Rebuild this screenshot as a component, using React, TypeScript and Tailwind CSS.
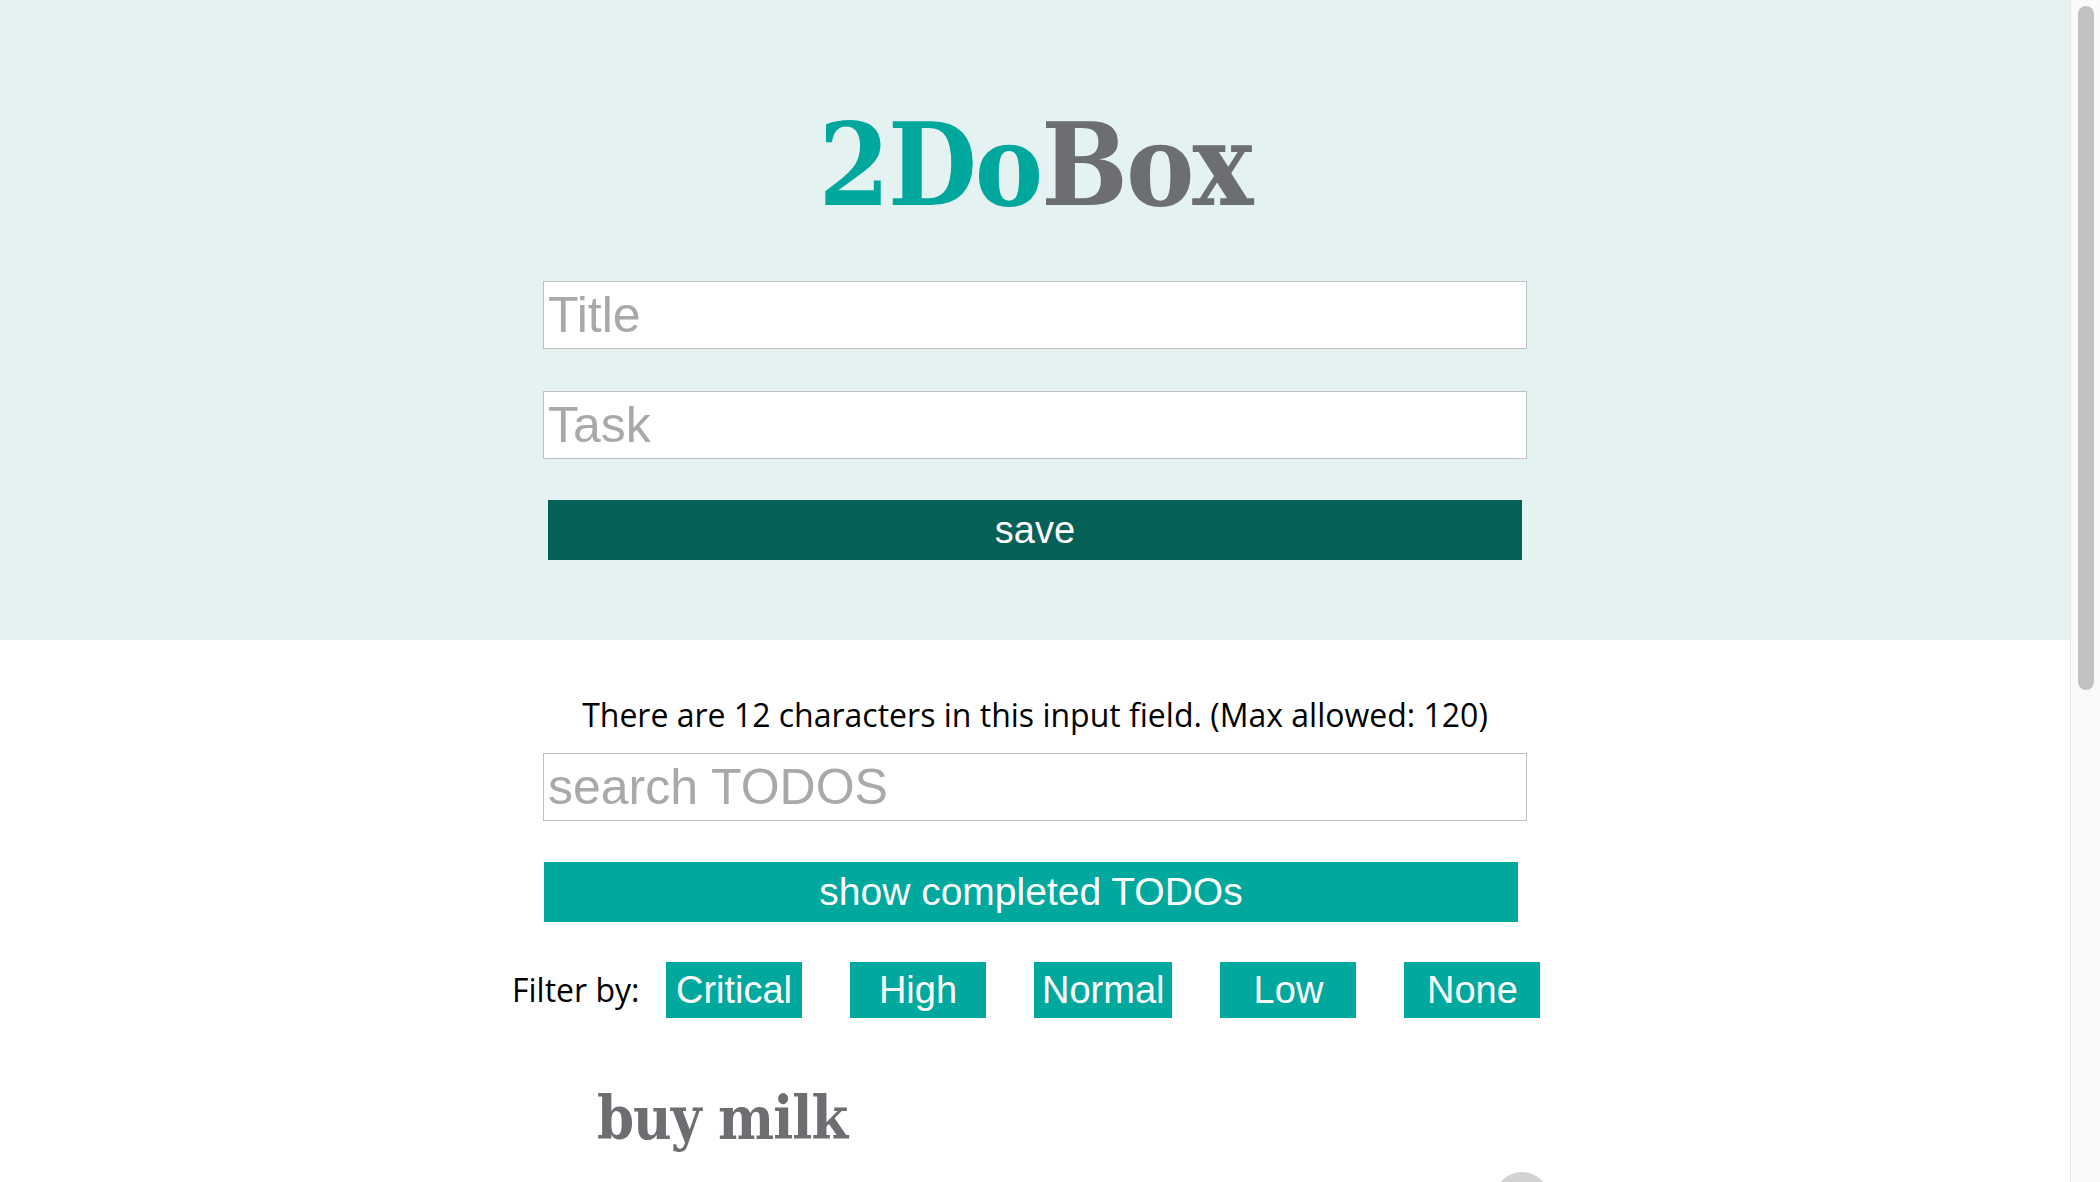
import React from "react";

const slab = "font-['DejaVu_Serif',serif] [font-stretch:condensed]";
const sans = "font-['Liberation_Sans',Arial,sans-serif]";

export default function App() {
  const filters = ["Critical", "High", "Normal", "Low", "None"];
  const inputCls = `w-[984px] h-[68px] shrink-0 bg-white border border-[#c0c0c0] px-[4px] text-[50px] ${sans} placeholder:text-[#a9a9a9] outline-none`;
  return (
    <div className="flex h-[1182px] w-full overflow-hidden bg-white">
      <div className="w-[2070px] shrink-0 flex flex-col">
        <header className="h-[640px] shrink-0 bg-[#e4f2f2] flex flex-col items-center pt-[108px]">
          <h1 className={`${slab} font-bold text-[114px] tracking-[-2px] leading-none h-[114px] shrink-0`}>
            <span className="text-[#00a79d]">2Do</span>
            <span className="text-[#6d6e71]">Box</span>
          </h1>
          <input placeholder="Title" className={`mt-[59px] ${inputCls}`} />
          <input placeholder="Task" className={`mt-[42px] ${inputCls}`} />
          <button className={`mt-[41px] w-[974px] h-[60px] shrink-0 bg-[#056057] text-white text-[38px] ${sans} flex items-center justify-center`}>
            save
          </button>
        </header>
        <main className="flex flex-col items-center shrink-0">
          <p className="mt-[57px] h-[36px] leading-[36px] text-[32px] text-black font-['Open_Sans',sans-serif] whitespace-nowrap">
            There are 12 characters in this input field. (Max allowed: 120)
          </p>
          <input placeholder="search TODOS" className={`mt-[20px] ${inputCls}`} />
          <button className={`mt-[41px] mr-[8px] w-[974px] h-[60px] shrink-0 bg-[#00a89d] text-white text-[39px] ${sans} flex items-center justify-center`}>
            show completed TODOs
          </button>
          <div className="mt-[40px] w-full pr-[18px]">
            <div className="w-[1028px] mx-auto flex items-center h-[56px]">
              <span className="w-[124px] text-[32px] text-black font-['Open_Sans',sans-serif] whitespace-nowrap">
                Filter by:
              </span>
              <div className="ml-[30px] flex gap-[48px]">
                {filters.map((f) => (
                  <button
                    key={f}
                    className={`min-w-[136px] h-[56px] px-[8px] bg-[#00a89d] text-white text-[38px] ${sans} flex items-center justify-center`}
                  >
                    {f}
                  </button>
                ))}
              </div>
            </div>
          </div>
          <div className="mt-[71px] w-[1030px] flex flex-col">
            <h2 className={`${slab} font-bold text-[59px] tracking-[-1px] leading-none h-[59px] pl-[77px] text-[#6d6e71]`}>
              buy milk
            </h2>
            <div className="mt-[24px] flex justify-end">
              <div className="w-[56px] h-[56px] rounded-full bg-[#d1d2d4]" />
            </div>
          </div>
        </main>
      </div>
      <div className="w-[30px] shrink-0 h-full bg-[#fafafa] border-l border-[#e8e8e8] pt-[6px] flex justify-center">
        <div className="w-[16px] h-[684px] rounded-full bg-[#c1c1c1]" />
      </div>
    </div>
  );
}
